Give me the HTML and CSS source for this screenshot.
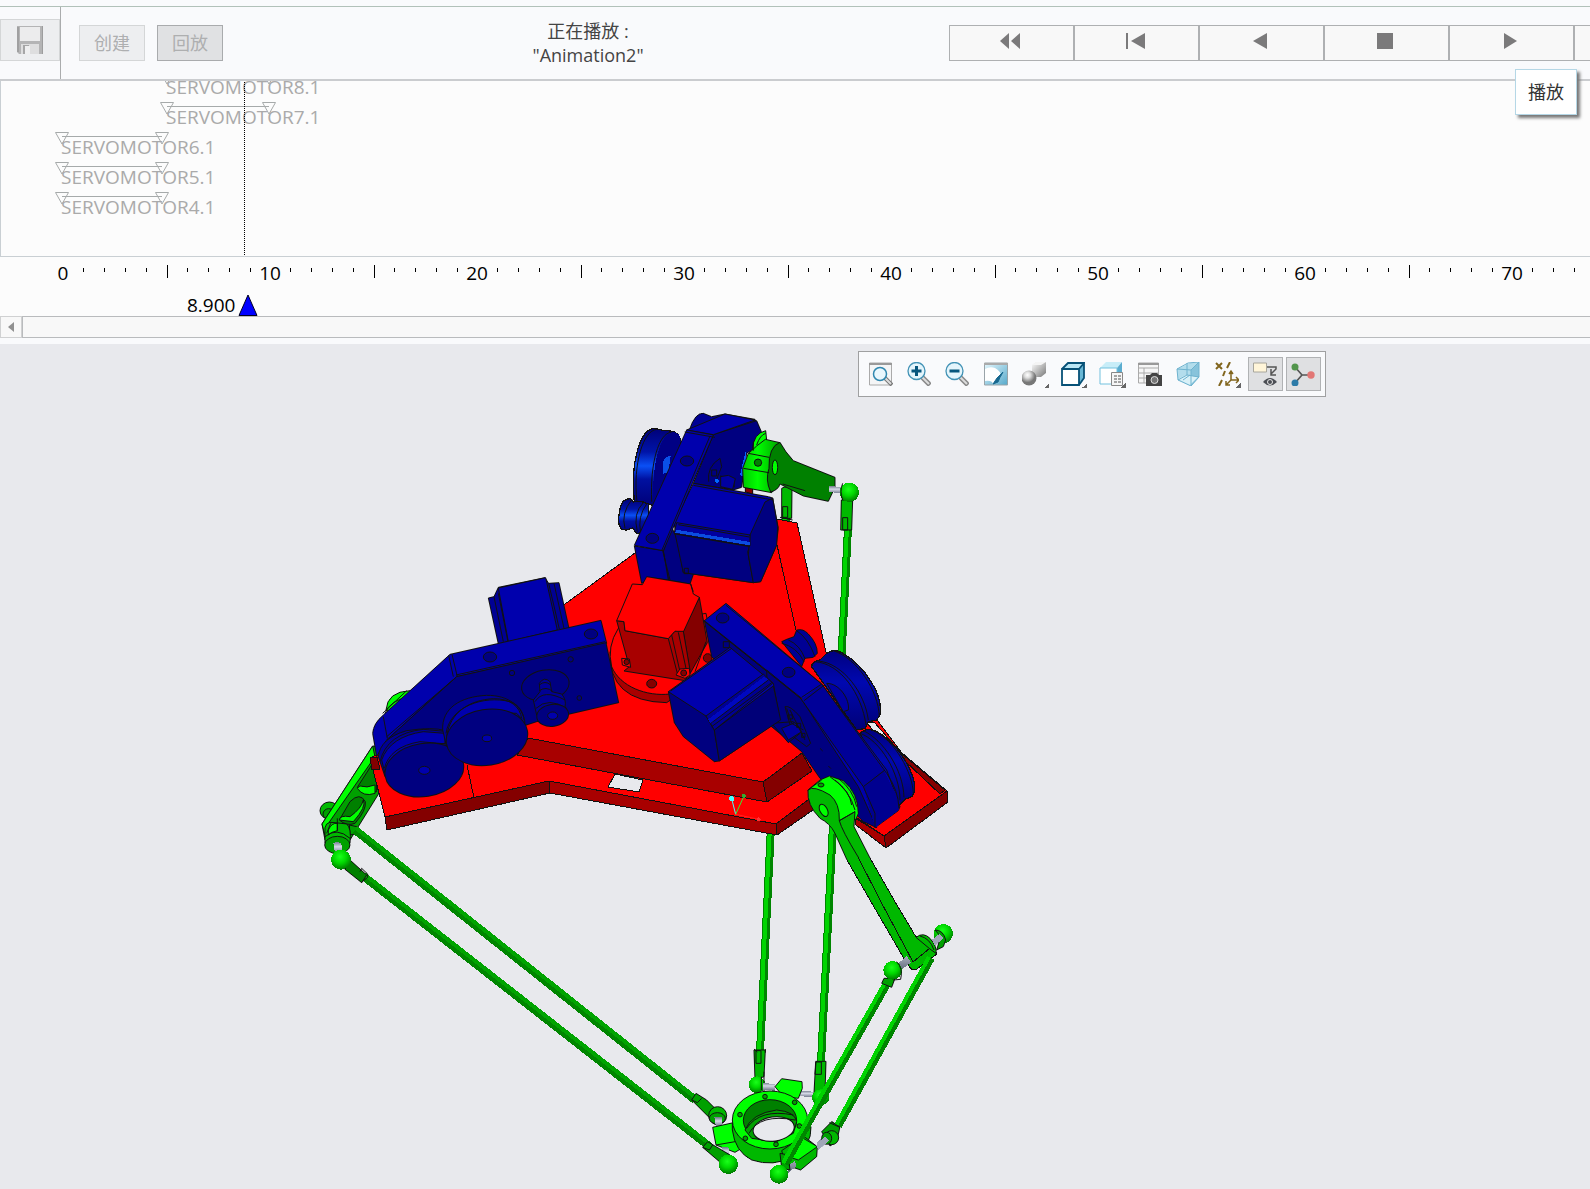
FILE: index.html
```html
<!DOCTYPE html>
<html lang="zh-CN">
<head>
<meta charset="utf-8">
<meta name="viewport" content="width=device-width, initial-scale=1">
<title>Animation2</title>
<link rel="stylesheet" href="styles.css">
</head>
<body>
<header class="topbar">
  <div class="save-cell">
    <button class="save" type="button" aria-label="保存" disabled>
      <svg width="28" height="30" viewBox="0 0 28 30"><path d="M1 1h26v28H3l-2-2z" fill="#b4b4b5"/><path d="M4 2h20v14H4z" fill="#ececed"/><path d="M2 2v25" stroke="#a0a0a1" stroke-width="2"/><path d="M26.500 1v28" stroke="#9d9d9e"/><path d="M5 19h18v10H5z" fill="#dededf"/><path d="M7 20h6v9H7z" fill="#a6a6a7"/><path d="M9 21h5v8H9z" fill="#efeff0"/></svg>
    </button>
  </div>
  <div class="modes">
    <button class="mode" type="button" disabled>创建</button>
    <button class="mode mode-active" type="button" disabled>回放</button>
  </div>
  <div class="status"><span>正在播放 :</span><span>"Animation2"</span></div>
  <div class="player">
    <button type="button" aria-label="快退"><svg width="24" height="18" viewBox="0 0 24 18"><path d="M11 1v16L2 9zM22 1v16L13 9z"/></svg></button>
    <button type="button" aria-label="开头"><svg width="24" height="18" viewBox="0 0 24 18"><path d="M3 1h2v16H3zM22 1v16L8 9z"/></svg></button>
    <button type="button" aria-label="倒放"><svg width="24" height="18" viewBox="0 0 24 18"><path d="M19 1v16L5 9z"/></svg></button>
    <button type="button" aria-label="停止"><svg width="24" height="18" viewBox="0 0 24 18"><path d="M4 1h16v16H4z"/></svg></button>
    <button type="button" aria-label="播放"><svg width="24" height="18" viewBox="0 0 24 18"><path d="M6 1v16L19 9z"/></svg></button>
    <button type="button" aria-label="结尾"></button>
  </div>
  <div class="tooltip" role="tooltip">播放</div>
</header>

<section class="tracks">
  <div class="track late"><svg width="116" height="14" viewBox="0 0 116 14"><path d="M7 4.500H109M.5 .5H13.500L7 12zM102.500 .5H115.500L109 12z"/></svg><span>SERVOMOTOR8.1</span></div>
  <div class="track late"><svg width="116" height="14" viewBox="0 0 116 14"><path d="M7 4.500H109M.5 .5H13.500L7 12zM102.500 .5H115.500L109 12z"/></svg><span>SERVOMOTOR7.1</span></div>
  <div class="track"><svg width="116" height="14" viewBox="0 0 116 14"><path d="M7 4.500H107M.5 .5H13.500L7 12zM100.500 .5H113.500L107 12z"/></svg><span>SERVOMOTOR6.1</span></div>
  <div class="track"><svg width="116" height="14" viewBox="0 0 116 14"><path d="M7 4.500H107M.5 .5H13.500L7 12zM100.500 .5H113.500L107 12z"/></svg><span>SERVOMOTOR5.1</span></div>
  <div class="track"><svg width="116" height="14" viewBox="0 0 116 14"><path d="M7 4.500H107M.5 .5H13.500L7 12zM100.500 .5H113.500L107 12z"/></svg><span>SERVOMOTOR4.1</span></div>
  <div class="cursor"></div>
</section>

<svg class="defs" width="0" height="0" aria-hidden="true">
  <symbol id="ticks" viewBox="0 0 168 14"><path d="M.5 4v4M21.500 4v4M42.500 4v4M63.500 4v4M84.500 1v13M104.500 4v4M125.500 4v4M146.500 4v4M167.500 4v4" stroke="#000" fill="none"/></symbol>
</svg>
<section class="ruler">
  <div class="decade"><span>0</span><svg><use href="#ticks"/></svg></div>
  <div class="decade"><span>10</span><svg><use href="#ticks"/></svg></div>
  <div class="decade"><span>20</span><svg><use href="#ticks"/></svg></div>
  <div class="decade"><span>30</span><svg><use href="#ticks"/></svg></div>
  <div class="decade"><span>40</span><svg><use href="#ticks"/></svg></div>
  <div class="decade"><span>50</span><svg><use href="#ticks"/></svg></div>
  <div class="decade"><span>60</span><svg><use href="#ticks"/></svg></div>
  <div class="decade"><span>70</span><svg><use href="#ticks"/></svg></div>
</section>
<div class="playhead"><span>8.900</span><svg width="20" height="22" viewBox="0 0 20 22"><path d="M10 1L19 21.500H1z" fill="#00f" stroke="#002"/></svg></div>
<div class="scroll"><button type="button" aria-label="向左滚动"><svg width="8" height="12" viewBox="0 0 8 12"><path d="M7 1v10L1 6z" fill="#909090"/></svg></button><div class="thumb"></div></div>

<main class="viewport">
<div class="tools" role="toolbar">
  <button type="button" aria-label="重新调整"><svg viewBox="0 0 24 24"><path d="M.5 1h22v22H.5z" fill="#f4f5f6" stroke="#aaa"/><path d="M0 2h23" stroke="#999" stroke-width="2"/><path d="M16 16l7 7" stroke="#777" stroke-width="4"/><path d="M16 16l6 6" stroke="#ddd" stroke-width="2"/><circle cx="11" cy="12" r="6.500" fill="#e9f7fd" stroke="#3088b0" stroke-width="1.500"/></svg></button>
  <button type="button" aria-label="放大"><svg viewBox="0 0 24 24"><path d="M14 14l9 9" stroke="#888" stroke-width="5"/><path d="M14 14l8 8" stroke="#ddd" stroke-width="2"/><circle cx="9.500" cy="9" r="8.500" fill="#e4f5fc" stroke="#4292b5" stroke-width="1.300"/><path d="M4.500 9h10M9.500 4v10" stroke="#07567d" stroke-width="3"/></svg></button>
  <button type="button" aria-label="缩小"><svg viewBox="0 0 24 24"><path d="M14 14l9 9" stroke="#888" stroke-width="5"/><path d="M14 14l8 8" stroke="#ddd" stroke-width="2"/><circle cx="9.500" cy="9" r="8.500" fill="#e4f5fc" stroke="#4292b5" stroke-width="1.300"/><path d="M4.500 9h10" stroke="#07567d" stroke-width="3"/></svg></button>
  <button type="button" aria-label="重画"><svg viewBox="0 0 24 24"><defs><linearGradient id="sky" x2="1" y2="1"><stop stop-color="#e6f7fd"/><stop offset="1" stop-color="#55a9cb"/></linearGradient></defs><path d="M.5 1h23v22H.5z" fill="url(#sky)" stroke="#9aa4a9"/><path d="M0 2h24" stroke="#aaa" stroke-width="2"/><path d="M1 7Q6 4 11 6q6 3 6 9L9 22Q8 18 1 19z" fill="#fff"/><path d="M19 10l-6 6-4 6 5-2q1-3 5-10z" fill="#17688f" stroke="#17688f"/></svg></button>
  <button type="button" class="more" aria-label="渲染"><svg viewBox="0 0 24 24"><defs><radialGradient id="ball" cx=".4" cy=".3"><stop stop-color="#fff"/><stop offset=".4" stop-color="#ddd"/><stop offset="1" stop-color="#777"/></radialGradient><linearGradient id="cube" x2="1" y2="1"><stop stop-color="#fff"/><stop offset="1" stop-color="#777"/></linearGradient></defs><path d="M10 3l4-3h10v11l-5 4h-9z" fill="url(#cube)"/><path d="M10 3l4-3h10l-5 3z" fill="#f4f4f4"/><circle cx="7" cy="16" r="7.500" fill="url(#ball)"/></svg></button>
  <button type="button" class="more" aria-label="显示样式"><svg viewBox="0 0 24 24"><path d="M1 7l6-6h16l-5 6z" fill="#b9e6f5"/><path d="M18 7l5-6v15l-5 7z" fill="#68b7d5"/><path d="M1 7h17v16H1zM1 7l6-6h16l-5 6M23 1v15l-5 7" fill="none" stroke="#075177" stroke-width="1.800"/><path d="M2 8h15v14H2z" fill="#fff"/></svg></button>
  <button type="button" class="more" aria-label="已保存方向"><svg viewBox="0 0 24 24"><path d="M1 6l6-6h16l-5 6z" fill="#c8edf8"/><path d="M18 6l5-6v12h-5z" fill="#5badd0"/><path d="M1 6h17v16H1z" fill="#fff" stroke="#72c1de"/><path d="M12.500 10.500h11v13h-11z" fill="#f6f6f6" stroke="#888"/><path d="M15 14h3m1 0h3m-7 3h3m1 0h3m-7 3h3m1 0h3" stroke="#888" stroke-width="1.500"/></svg></button>
  <button type="button" aria-label="视图管理器"><svg viewBox="0 0 24 24"><path d="M.5 1h20v20H.5zM.5 6h20M.5 11h20M.5 16h20M6 6v15" fill="#f6f6f6" stroke="#aaa"/><path d="M0 2h21" stroke="#999" stroke-width="2"/><path d="M8 13h4l2-2h5l2 2h3v11H8z" fill="#444"/><circle cx="16.500" cy="18" r="3.500" fill="#777" stroke="#ddd"/></svg></button>
  <button type="button" aria-label="透视图"><svg viewBox="0 0 24 24"><path d="M1 7L14 1 23 0v15l-8 9L2 18z" fill="#b3ddec"/><path d="M15 8l8-8v15l-8 9z" fill="#87c3db"/><path d="M2 17l8-4 12 2-8 8z" fill="#d9f1f8"/><path d="M1 7l14 1v16L2 18zM1 7L12 1l11-1-8 8M23 0v15l-8 9M11 1v12L2 18M11 13l12 2M7 18l7-5" fill="none" stroke="#6fb3cf"/></svg></button>
  <button type="button" class="more" aria-label="基准显示"><svg viewBox="0 0 24 24"><path d="M1 1l6 6M7 1L1 7M15 0l-3 6M10 9l-2 5M7 18l-3 6" stroke="#81651e" stroke-width="2" fill="none"/><path d="M16 9v9h8M16 18l-5 5M14 12l2-3 2 3M21 15l3 3-3 3M11 19v4h4" stroke="#81651e" stroke-width="1.500" fill="none"/></svg></button>
  <button type="button" class="on" aria-label="注释显示" aria-pressed="true"><svg viewBox="0 0 24 24"><path d="M.5 1h13v9H.5z" fill="#fff5d9" stroke="#a8a69c"/><path d="M14 5h9v2l-5 5M18 7v6h5" fill="none" stroke="#555" stroke-width="1.500"/><path d="M10 20q7-8 14 0-7 7-14 0z" fill="#4b4e54"/><circle cx="17" cy="20" r="2.500" fill="#4b4e54" stroke="#e8e8e8"/></svg></button>
  <button type="button" class="on" aria-label="旋转中心" aria-pressed="true"><svg viewBox="0 0 24 24"><path d="M4 5l7 8h8M11 13l-7 8" stroke="#555" stroke-width="1.700" fill="none"/><circle cx="4" cy="5" r="3.500" fill="#52954c"/><circle cx="4" cy="21" r="3.500" fill="#2c7ba8"/><circle cx="20" cy="13" r="3.700" fill="#e27775"/></svg></button>
</div>

<svg class="scene" viewBox="0 344 1590 845" role="img" aria-label="Delta 机构三维模型">
<defs>
  <radialGradient id="gb" cx=".45" cy=".35" r=".65"><stop stop-color="#1aff1a"/><stop offset=".5" stop-color="#00d800"/><stop offset="1" stop-color="#007a00"/></radialGradient>
  <linearGradient id="bw" x2="0" y2="1"><stop stop-color="#000078"/><stop offset=".3" stop-color="#0014a8"/><stop offset=".48" stop-color="#0a50f5"/><stop offset=".65" stop-color="#0010a0"/><stop offset="1" stop-color="#000078"/></linearGradient>
  <linearGradient id="br" y2="1" x2="0"><stop stop-color="#000080"/><stop offset=".4" stop-color="#0008b0"/><stop offset="1" stop-color="#000078"/></linearGradient>
  <linearGradient id="gr"><stop stop-color="#00c800"/><stop offset=".4" stop-color="#0f0"/><stop offset="1" stop-color="#00a000"/></linearGradient>
  <linearGradient id="pin" x2="0" y2="1"><stop stop-color="#737b8c"/><stop offset=".4" stop-color="#d4d8e6"/><stop offset="1" stop-color="#666d80"/></linearGradient>
</defs>

<!-- rear rods -->
<g class="rod"><path class="dk" d="M848 528L821 1062M786 518L760 1052"/><path class="lt" d="M847 528L820 1062M785 518L759 1052"/></g>

<!-- left arm -->
<g class="part" transform="translate(300 660) scale(.33333)">
  <path class="g1" d="M258 150Q262 95 330 92L360 92 300 170z"/><path class="ln" d="M248 160L320 92M255 160Q270 120 330 110"/>
  <ellipse class="g2" cx="88" cy="452" rx="28" ry="26"/><ellipse class="g3" cx="86" cy="462" rx="17" ry="16"/>
  <path class="g3" d="M218 258L66 492 75 540 150 540 240 395 240 260z"/>
  <path class="g1" d="M218 258L66 492 75 525 88 486 225 290z"/>
  <path class="g4" d="M218 310L172 382Q190 405 230 395V310zM118 480L150 425Q180 395 196 425 200 450 165 490 140 500 118 480z"/>
  <path class="g1" d="M172 385Q190 412 225 400V375Q200 385 180 378zM190 420Q200 440 160 485L118 480Q120 465 150 470 185 445 190 420z"/>
  <path class="g3" d="M148 495L170 500 170 520 150 525z"/>
  <path class="g2" d="M75 520Q70 480 105 488L140 492Q155 505 150 550H75z"/><path class="g1" d="M85 510Q95 488 112 490V512Q95 515 85 525z"/><path class="ln" d="M75 530Q110 500 150 535M112 475V512M92 490L80 520"/>
  <ellipse class="g3" cx="112" cy="555" rx="38" ry="26"/>
  <path d="M100 550Q112 540 124 552L128 582H106z" fill="url(#pin)"/>
</g>

<!-- base plate -->
<g class="part full">
  <path class="r1" d="M370 758L385 817 549 781 776 824 813 798 857 818 884 836 947 791 902 753 826 652 797 523 777 519 635 553 565 604 480 700z"/>
  <path class="void" d="M866 722L874 722 902 754 890 750z"/>
  <path class="r3" d="M385 817L549 781 550 793 387 830z"/>
  <path class="r2" d="M549 781L776 824 777 835 550 793z"/>
  <path class="r3" d="M776 824L813 796 813 810 777 835z"/>
  <path class="r2" d="M528 738L763 782 767 802 517 755z"/>
  <path class="r3" d="M763 782L802 753 812 771 767 802z"/>
  <path class="r2" d="M855 818L884 836 886 848 856 825z"/>
  <path class="r3" d="M884 836L947 791 948 802 886 848zM902 754L945 790 940 794 904 760zM370 758L377 757 380 769 372 770z"/>
  <path class="ln" d="M777 545L796 630M467 765L474 798"/>
  <path class="void" d="M615 774L643 780 639 792 608 787z"/>
</g>

<!-- top drive -->
<g class="part" transform="translate(600 400) scale(.33333)">
  <path class="r3" d="M436 262L458 262V282L436 276z"/>
  <path class="g2" d="M545 265Q560 255 576 268L575 355 545 355z"/><path class="ln" d="M548 320H563V352H548zM540 352L578 360"/>
  <path d="M103 305C90 190 120 85 165 85L192 92Q240 90 242 125L180 320z" fill="url(#bw)" stroke="#111" stroke-width="4"/>
  <path class="ln" d="M155 305C150 190 175 100 215 96"/><path class="ln" d="M111 305C98 190 130 92 170 88"/>
  <path d="M160 305C155 190 180 100 220 97Q240 95 242 125L180 320z" fill="#000084"/>
  <path class="b5" d="M190 222Q180 170 212 168L205 215z"/>
  <path d="M65 388Q50 370 58 340 62 295 90 296L100 306Q120 300 145 312V398L110 400 98 384 80 390z" fill="url(#bw)" stroke="#111" stroke-width="4"/>
  <path class="ln" d="M75 385Q62 340 96 298M112 395Q98 340 130 308M122 398Q112 350 140 312"/>
  <path class="b2" d="M268 90Q285 38 310 40L335 50 375 42 465 58 482 95 470 120 300 100z"/>
  <path class="b3" d="M340 104L470 62 484 95 470 140 440 160 425 262 400 270 280 250z"/>
  <path class="b1" d="M260 90L375 42 465 60 340 104z"/>
  <path class="ln" d="M326 245Q320 200 360 175L365 200 345 250M335 210h15v18h-15zM360 228L400 235 403 262"/>
  <path class="b4" d="M362 230L385 226 406 236 398 268 362 260z"/><circle cx="351" cy="243" r="6" fill="#06f"/><path d="M438 150L420 225 430 230 440 190z" fill="#0960f8"/>
  <path class="b3" d="M215 380L190 455 205 540 270 552 282 518 262 490z"/>
  <path class="b1" d="M280 250L505 290 518 294 535 385 528 440 482 545 460 548 250 518 222 370z"/>
  <path class="b3" d="M225 400L450 438 443 455 460 548 250 518z"/>
  <path class="b3" d="M518 294L495 306 450 405 445 465 460 548 482 545 530 435 533 380z"/>
  <path class="b4" d="M230 368L450 405 450 438 222 400z"/><path d="M228 389L450 426V436L226 398z" fill="#0b4ce0"/>
  <path class="ln" d="M280 256L497 296 520 300M235 374L448 411M225 402L450 440M253 505h12v16h-12z"/>
  <path class="b2" d="M103 438L190 452 205 540 148 532 125 550z"/>
  <path class="b1" d="M260 90L340 105 190 452 103 436z"/><path class="ln" d="M254 96L345 112M330 108L186 450M188 452L210 540"/>
  <ellipse class="b3" cx="261" cy="183" rx="20" ry="15"/><ellipse class="b3" cx="157" cy="415" rx="19" ry="15"/>
  <path class="g1" d="M457 150Q460 100 497 92L500 120 470 150z"/><path class="ln" d="M470 135Q480 105 497 100"/>
  <path d="M445 160L457 150 470 138 496 118 540 128 530 260 515 278 430 262 428 205z" fill="url(#gr)" stroke="#111" stroke-width="3"/>
  <path class="g4" d="M540 127Q505 140 507 205 495 240 512 276 535 270 540 252L610 288 685 304 705 262V232L580 182Q555 155 540 127z"/>
  <path class="ln" d="M445 160L507 172M430 205L507 218M460 125V152M548 252L615 272"/>
  <ellipse class="g4" cx="474" cy="188" rx="11" ry="11"/><ellipse class="g1" cx="525" cy="202" rx="8" ry="22"/>
  <path d="M688 258L730 262V282L686 275z" fill="url(#pin)"/>
  <path class="g2" d="M724 300H758L755 390H722z"/><path class="ln" d="M728 353H743V390H728z"/>
  <circle cx="748" cy="277" r="29" fill="url(#gb)"/><path class="ln" d="M728 250Q718 275 728 300"/>
</g>

<!-- centre motor -->
<g class="part" transform="translate(600 560) scale(.33333)">
  <path class="r2" d="M30 275Q25 425 200 428L240 400z"/>
  <path class="r1" d="M55 205Q20 260 35 320C60 380 140 410 210 402L345 300 318 160z"/>
  <path class="r3" d="M298 112L322 248 268 345 235 300 250 210z"/>
  <path class="r2" d="M50 182L72 185 75 212 205 236 235 216 250 216 270 335 255 362 72 333 88 320z"/>
  <path class="r1" d="M97 72L127 74 140 50 272 72 280 102 298 112 250 216 225 214 205 236 75 212 72 185 50 182z"/>
  <path class="r2" d="M205 236L225 214H250L270 330 232 340z"/><path class="ln" d="M215 225L240 335M235 217L258 325M272 72L280 95M318 245L285 335"/>
  <path class="r1" d="M228 345L240 327 268 325 270 345 255 355zM65 295L88 297 92 322 67 315z"/>
  <ellipse class="r3" cx="251" cy="339" rx="9" ry="9"/><ellipse class="r3" cx="155" cy="371" rx="15" ry="13"/><ellipse class="r3" cx="323" cy="294" rx="13" ry="13"/><ellipse class="r3" cx="80" cy="306" rx="8" ry="8"/>
</g>

<!-- left drive -->
<g class="part" transform="translate(350 560) scale(.33333)">
  <path class="b2" d="M415 114L432 110 445 82 585 53 596 70 627 68 657 205 445 252z"/>
  <path class="b1" d="M445 84L587 53 622 210 475 245z"/><path class="ln" d="M432 110L460 245M445 100L474 245M596 70L628 207M612 70L642 205"/>
  <path class="b1" d="M300 283L753 181 770 250 320 350 110 540 80 590 68 520Q70 490 100 465z"/>
  <path class="b3" d="M320 350L768 248 806 428 560 485 300 570 110 540z"/>
  <path class="ln" d="M296 286L310 350M306 283L322 350M318 345L765 245M110 530L318 352M100 470L112 535"/>
  <ellipse class="b3" cx="420" cy="291" rx="20" ry="15"/><ellipse class="b3" cx="723" cy="222" rx="20" ry="15"/>
  <ellipse class="b3" cx="586" cy="376" rx="72" ry="46" transform="rotate(-10 586 376)"/>
  <circle class="b3" cx="486" cy="339" r="8"/><circle class="b3" cx="662" cy="298" r="8"/><circle class="b3" cx="688" cy="414" r="7"/>
  <path class="b2" d="M568 370Q582 348 600 365L605 395 635 402Q650 420 645 440L655 460 560 465 550 420 570 395z"/><path class="ln" d="M555 425Q580 385 645 420M558 445Q595 410 650 445M568 375Q585 360 602 375M568 392Q588 378 608 394"/>
  <ellipse class="b3" cx="608" cy="466" rx="48" ry="33" transform="rotate(-8 608 466)"/><ellipse class="b1" cx="608" cy="467" rx="15" ry="11"/>
  <path class="b2" d="M85 590Q90 535 170 512 250 500 285 512L300 560 105 650z"/>
  <path class="b1" d="M95 600Q120 530 220 515L285 520 285 550 190 560 105 640z"/>
  <path class="ln" d="M90 605Q110 520 220 508L285 514M103 625Q120 560 210 545L290 552"/>
  <path class="b2" d="M278 510C275 445 330 410 410 406 475 405 520 440 525 490L290 560z"/>
  <path class="b1" d="M290 530C300 455 360 420 430 416 480 415 510 440 515 475L500 460 380 455z"/>
  <path class="ln" d="M288 520C300 440 400 405 480 425 510 435 520 460 522 480"/>
  <ellipse class="b3" cx="223" cy="630" rx="119" ry="80" transform="rotate(-9 223 630)"/>
  <ellipse class="b3" cx="411" cy="532" rx="123" ry="84" transform="rotate(-9 411 532)"/>
  <ellipse class="b1" cx="223" cy="631" rx="17" ry="12"/><ellipse class="b1" cx="411" cy="535" rx="14" ry="10"/>
</g>

<!-- right drive -->
<g class="part" transform="translate(600 560) scale(.33333)">
  <path class="b2" d="M545 245L560 238 582 230 590 210Q610 205 625 222 652 250 652 280L640 292 615 295 605 320z"/><path class="ln" d="M545 250Q590 260 612 305M565 240Q600 255 615 296M590 212Q625 235 645 290"/>
  <path d="M635 320Q635 305 660 300L680 280Q700 265 725 278C800 320 850 410 840 465L830 480 805 485 795 505 770 510z" fill="url(#br)" stroke="#111" stroke-width="4"/>
  <path class="ln" d="M655 303C730 310 795 400 805 480M645 305C720 310 785 400 798 495M700 272C770 295 835 390 838 470"/><path class="b4" d="M680 370C720 370 750 420 745 450L730 455z"/>
  <path d="M780 520Q800 500 830 515C890 545 950 640 944 695L935 710 915 718 895 740z" fill="url(#br)" stroke="#111" stroke-width="4"/><path class="ln" d="M780 520C840 540 900 640 900 720M790 512C850 540 910 630 912 712M820 512C885 540 938 640 940 700"/>
  <path class="b3" d="M313 182L600 415 545 500 335 290z"/>
  <path class="b1" d="M378 130L665 372 860 630 900 740 895 752 825 803 775 710 605 415 313 182z"/>
  <path class="b3" d="M500 330L605 418 775 680 830 803 790 785 660 655 605 575 505 492z"/>
  <path d="M665 372L605 418 790 680 850 630z" fill="#000098"/><path d="M790 680L850 630 900 725 895 752 825 803z" fill="#000090"/>
  <path class="ln" d="M378 136L665 372 860 640Q895 690 897 745M313 184L602 415 790 680 825 760V803M605 412L665 372M612 422L672 376M790 680L855 630"/>
  <ellipse class="b3" cx="368" cy="174" rx="19" ry="15"/><ellipse class="b3" cx="566" cy="337" rx="19" ry="15"/>
  <path class="b3" d="M555 440Q570 435 600 470L632 550 620 560 580 530zM515 490L580 485 600 520 565 548z"/><path class="b4" d="M545 505L585 488 605 515 565 540z"/><path class="ln" d="M560 445L575 490 610 510M570 450L615 540M565 465h12v12h-12zM590 490h12v12h-12zM605 520h10v12h-10zM660 565l8 8M685 618l8 8M370 245h18v18h-18z"/>
  <path class="b1" d="M205 395L390 262 490 345 520 370 540 480 358 603 343 510z"/>
  <path class="b3" d="M205 395L318 468 343 510 358 603 343 605 250 530 223 488z"/>
  <path d="M343 510L520 378 542 480 358 603z" fill="#000078" stroke="#111" stroke-width="3"/>
  <path class="b2" d="M318 468L490 342 518 370 343 510z"/><path d="M325 478L492 350 505 358 332 492z" fill="#0008c0"/><path class="ln" d="M330 492L505 360M335 500L515 368M212 393L395 265"/>
</g>

<!-- front right arm -->
<g class="part" transform="translate(600 560) scale(.33333)">
  <path class="g1" d="M624 690L660 660 688 648 730 662Q775 700 775 760L768 778 720 785 690 790 640 740z"/>
  <path class="g2" d="M741 900L705 820Q690 790 660 775 620 735 624 690 640 675 690 705 720 730 718 782L765 755 762 800 810 894"/>
  <path class="ln" d="M690 650Q750 690 765 750M705 660Q750 695 755 735M715 655Q760 690 770 740M624 690L665 660M718 782L765 755M718 782Q725 810 775 892"/><ellipse class="g1" cx="671" cy="751" rx="11" ry="20" transform="rotate(-28 671 751)"/><ellipse class="g3" cx="663" cy="675" rx="9" ry="6"/>
  <g class="axis"><path d="M407 763L395 716" stroke="#4ff"/><path d="M407 763L432 708" stroke="#3e3"/><path d="M407 763L476 778" stroke="#f22"/><circle cx="395" cy="716" r="8" fill="#4ff"/><circle cx="432" cy="708" r="6" fill="#3a3"/><circle cx="476" cy="778" r="6" fill="#f33"/></g>
</g>
<g class="part full"><path class="g2" d="M847 860L870 900 906 962 912 970 917 969 937 954 930 940 923 935 916 937 894 900 870 858"/><path class="ln" d="M858 857L880 900 913 962 930 948M916 937L930 948"/></g>

<!-- long rods -->
<g class="rod left"><path class="dk" d="M355 830L695 1100M363 876L710 1147"/><path class="lt" d="M356 828L696 1098M364 874L711 1145"/></g>
<g class="part" transform="translate(300 660) scale(.33333)"><path class="g4" d="M150 600L200 645 185 668 135 628z"/><path class="ln" d="M180 635L185 625 203 642V652L185 667"/><circle cx="123" cy="599" r="30" fill="url(#gb)"/></g>

<!-- end effector -->
<g class="part" transform="translate(680 900) scale(.33333)">
  <path class="g2" d="M222 450H256L252 530 225 540z"/><path class="ln" d="M228 452H243V490H228zM222 447L232 456M256 447V458"/><circle cx="231" cy="554" r="25" fill="url(#gb)"/><path class="ln" d="M252 515V575M244 530V570"/>
  <path d="M250 548L285 553V572L248 570z" fill="url(#pin)"/><path d="M360 572L400 575V593L358 588z" fill="url(#pin)"/>
  <path class="g2" d="M407 484H438L435 580H402z"/><path class="ln" d="M408 486H424V523H405z"/><ellipse cx="422" cy="592" rx="26" ry="24" fill="url(#gb)"/>
  <path class="g1" d="M285 560L305 536 366 545 367 565 355 595 310 590z"/>
  <path class="g3" d="M35 600L48 580 80 600 120 640 100 665z"/><circle class="g2" cx="113" cy="647" r="27"/><ellipse class="g3" cx="112" cy="655" rx="24" ry="17"/><path d="M103 652H125L128 680H108z" fill="url(#pin)"/>
  <path class="g1" d="M98 682L160 668 185 745 165 757 108 735z"/><path d="M125 742L145 742 150 770H132z" fill="url(#pin)"/>
  <path class="g3" d="M68 742L83 725 150 765 130 795z"/><path class="ln" d="M36 600L52 608 65 595M68 742L88 750 98 735M108 735L165 725"/><circle cx="145" cy="793" r="29" fill="url(#gb)"/>
  <path class="g2" d="M157 670L393 680Q395 740 340 770 280 802 215 780 165 755 157 690z"/>
  <ellipse class="g1" cx="270" cy="660" rx="113" ry="87"/><ellipse class="g4" cx="270" cy="661" rx="80" ry="62"/>
  <path class="g3" d="M195 690Q215 640 290 630 345 635 350 665L340 700 290 725 215 715z"/><ellipse class="void" cx="281" cy="687" rx="62" ry="36" transform="rotate(-8 281 687)"/><path class="ln" d="M200 685Q240 625 340 645M207 700Q240 640 345 660"/>
  <circle class="g3" cx="255" cy="590" r="7"/><circle class="g3" cx="344" cy="607" r="7"/><circle class="g3" cx="180" cy="644" r="7"/><circle class="g3" cx="196" cy="715" r="7"/><circle class="g3" cx="288" cy="733" r="7"/><circle class="g3" cx="358" cy="678" r="7"/>
  <path class="g2" d="M305 752L370 708 412 740 410 770 362 810 318 795z"/><path class="g1" d="M325 770L370 715 412 740 355 780z"/>
  <path d="M410 728L435 706 450 722 415 750zM320 800L345 783 350 798 325 818z" fill="url(#pin)"/>
  <path class="g3" d="M425 695L455 665 480 680 470 725 450 738z"/><circle class="g2" cx="455" cy="713" r="21"/><ellipse class="g3" cx="440" cy="715" rx="15" ry="18"/><path d="M408 735L436 710 446 722 416 750z" fill="#a0a6b8"/>
  <path d="M655 190L680 168 693 188 665 208zM750 125L785 98 797 112 765 138z" fill="url(#pin)"/>
  <path class="g2" d="M708 112Q730 95 750 115 772 140 768 160L750 147z"/><path class="ln" d="M720 108Q750 115 762 150"/>
  <circle cx="790" cy="101" r="29" fill="url(#gb)"/><path class="g3" d="M765 90Q790 90 797 120L790 140 770 150 782 110z"/><path d="M755 120L778 102 790 115 765 136z" fill="#a0a6b8"/>
</g>
<g class="rod"><path class="dk" d="M931 958L838 1126"/><path class="lt" d="M929 957L836 1125"/></g>
<g class="part" transform="translate(680 900) scale(.33333)"><path class="g3" d="M448 668L480 682M300 760L325 765 330 810 305 805z"/><circle cx="297" cy="823" r="28" fill="url(#gb)"/></g>
<g class="rod"><path class="dk" d="M888 982L785 1164"/><path class="lt" d="M886 981L783 1163"/></g>
<g class="part" transform="translate(680 900) scale(.33333)"><path class="g3" d="M612 235L645 235 635 262 605 250z"/><circle cx="638" cy="211" r="28" fill="url(#gb)"/><path class="ln" d="M650 185Q670 205 662 238L640 240M455 665L480 682"/></g>
</svg>
</main>
</body>
</html>
```
FILE: styles.css
```css
* { box-sizing: border-box; }

body {
  margin: 0;
  min-height: 100vh;
  display: flex;
  flex-direction: column;
  overflow-x: hidden;
  background: #f9fafc;
  color: #000;
  font: 19px/24px "Open Sans", "Noto Sans CJK SC", sans-serif;
}

button { font: inherit; padding: 0; margin: 0; border-radius: 0; }
.defs { position: absolute; }

/* header */
.topbar {
  position: relative;
  display: flex;
  height: 75px;
  margin-top: 6px;
  border-top: 1px solid #b1c1b9;
  border-bottom: 2px solid #cacccf;
}
.save-cell {
  width: 61px;
  padding-top: 12px;
  border-right: 1px solid #aaacad;
}
.save {
  display: flex;
  align-items: center;
  justify-content: center;
  width: 60px;
  height: 42px;
  border: 1px solid #d4d6d7;
  background: #edeef0;
}
.modes { display: flex; gap: 12px; padding: 18px 0 0 18px; }
.mode {
  width: 66px;
  height: 36px;
  border: 1px solid #d4d6d7;
  background: #edeef0;
  color: #aeafb0;
  font-size: 18px;
}
.mode-active { border-color: #a9abad; background: #e0e1e3; }
.status {
  flex: 1;
  display: flex;
  flex-direction: column;
  align-items: center;
  padding: 12px 0 0 4px;
  color: #444;
  font-size: 18px;
}
.player {
  display: flex;
  width: 641px;
  padding-top: 18px;
  overflow: hidden;
}
.player button {
  display: flex;
  justify-content: center;
  flex: 0 0 125px;
  height: 36px;
  padding: 6px 4px 0 0;
  border: 1px solid #aeb0b2;
  background: #f8f8f8;
}
.player svg { fill: #7b7a7b; }
.tooltip {
  position: absolute;
  z-index: 2;
  top: 62px;
  right: 13px;
  padding: 10px 12px;
  border: 1px solid #b5d7e6;
  background: #fff;
  box-shadow: 3px 3px 3px #777;
  color: #333;
  font-size: 18px;
}

/* timeline */
.tracks {
  position: relative;
  height: 176px;
  overflow: hidden;
  border-left: 1px solid #c9cfd3;
  border-bottom: 1px solid #c9cfd3;
  background: #fcfcfc;
  color: #aaa;
}
.track { display: grid; height: 30px; padding-left: 54px; }
.track.late { padding-left: 159px; }
.track:first-child { margin-top: -9px; }
.track > * { grid-area: 1 / 1; }
.track svg { fill: none; stroke: #a6aaaa; }
.track span { padding: 3px 0 0 6px; }
.cursor {
  position: absolute;
  top: 1px;
  bottom: 1px;
  left: 243px;
  border-left: 1px dotted #000;
}
.ruler {
  display: flex;
  height: 36px;
  padding: 4px 0 0 43px;
  overflow: hidden;
  background: #fcfcfc;
}
.decade { display: flex; flex: 0 0 207px; }
.decade span { width: 40px; text-align: center; }
.decade svg { flex: none; width: 168px; height: 14px; margin-top: 3px; margin-right: -1px; }
.playhead {
  display: flex;
  align-items: flex-end;
  gap: 3px;
  height: 23px;
  padding-left: 187px;
  background: #fcfcfc;
}
.playhead span { line-height: 22px; }
.scroll { display: flex; height: 22px; margin-bottom: 6px; }
.scroll button {
  display: flex;
  align-items: center;
  justify-content: center;
  width: 22px;
  border: 1px solid #d0d1d2;
  background: #f8f8f8;
}
.thumb {
  flex: 1;
  border: 1px solid #b9bbbd;
  border-right: 0;
  background: #f8f8f8;
}

/* graphics area */
.viewport { position: relative; flex: 1; background: #e8e9ed; }
.tools {
  position: absolute;
  top: 7px;
  right: 264px;
  display: flex;
  justify-content: space-between;
  width: 468px;
  padding: 5px 4px;
  border: 1px solid #9fa0a1;
  background: #f9fafc;
}
.tools button {
  position: relative;
  display: flex;
  align-items: center;
  justify-content: center;
  width: 35px;
  height: 34px;
  border: 1px solid transparent;
  background: none;
}
.tools button.on { border-color: #b0b2b4; background: #dfe0e2; }
.tools svg { width: 24px; height: 24px; fill: none; }
.more::after {
  content: "";
  position: absolute;
  right: 2px;
  bottom: 2px;
  width: 5px;
  height: 5px;
  background: linear-gradient(135deg, transparent 50%, #666 50%);
}

/* mechanism model */
.scene { display: block; width: 100%; height: auto; shape-rendering: crispEdges; }
.part { stroke-linejoin: round; }
.ln { fill: none; stroke: #111; stroke-width: 3; }
.r1, .r2, .r3, .b1, .b2, .b3, .b4, .g1, .g2, .g3, .g4, .void { stroke: #111; stroke-width: 3; }
.full > * { stroke-width: 1; }
.full > .void { stroke-width: 1; }
.r1 { fill: #f00; }
.r2 { fill: #a80000; }
.r3 { fill: #840000; }
.b1 { fill: #0000ad; }
.b2 { fill: #000094; }
.b3 { fill: #000080; }
.b4 { fill: #0000a0; }
.b5 { fill: #0a50e8; }
.g1 { fill: #0f0; }
.g2 { fill: #00b800; }
.g3 { fill: #00a000; }
.g4 { fill: #008000; }
.void { fill: #e8e9ed; }
.rod path { fill: none; }
.rod .dk { stroke: #008600; stroke-width: 8; }
.rod .lt { stroke: #00d400; stroke-width: 4; }
.rod.left .lt { stroke: #00a400; }
.axis path { stroke-width: 3; }
```
